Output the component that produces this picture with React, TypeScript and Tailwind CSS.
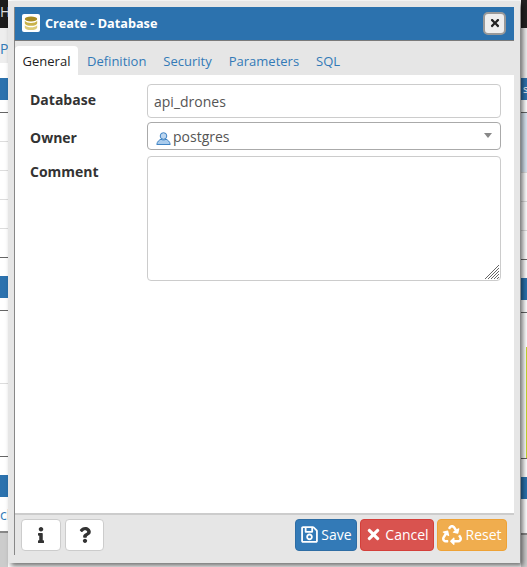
import { FaInfo, FaQuestion, FaRecycle, FaRegSave, FaTimes } from "react-icons/fa";

const tabs = ["Definition", "Security", "Parameters", "SQL"];

const DatabaseIcon = () => (
  <svg width="14" height="14" viewBox="0 0 14 14">
    <ellipse cx="7" cy="3" rx="6.2" ry="2.6" fill="#a88c24" />
    <path d="M.8 4.800C2 6.400 4.500 6.900 7 6.900s5-.5 6.200-2.100v2.400C13.200 8.900 10 9.800 7 9.800S.8 8.900.8 7.200z" fill="#c9b24a" />
    <path d="M.8 9.200C2 10.700 4.500 11.200 7 11.200s5-.5 6.200-2v2.200C13.200 13 10 14 7 14S.8 13 .8 11.400z" fill="#dccb78" />
  </svg>
);

const UserIcon = () => (
  <svg width="15" height="13" viewBox="0 0 15 13">
    <circle cx="7.500" cy="4" r="3.300" fill="#bcd6f0" stroke="#3f83c4" strokeWidth="1" />
    <path d="M.8 12.500c.3-3 2.700-4.800 4.200-5.200 1.300.8 3.700.8 5 0 1.500.4 3.900 2.200 4.200 5.200z" fill="#a9cbec" stroke="#3f83c4" strokeWidth="1" />
  </svg>
);

const Grip = () => (
  <svg width="15" height="15" viewBox="0 0 15 15" className="absolute bottom-[1px] right-[1px]" stroke="#666" strokeWidth="1">
    <path d="M0 14 14 0M3 14 14 3M6 14l8-8M9 14l5-5M12 14l2-2" />
  </svg>
);

function LeftEdge() {
  return (
    <div className="flex w-[8px] flex-col overflow-hidden bg-white text-[14px] text-[#337ab7]">
      <div className="h-[28px] shrink-0 bg-[#1c1c1c] pt-[1px] text-[#ddd]">H</div>
      <div className="flex h-[35px] shrink-0 items-end bg-[#eee] pb-[4px] leading-[20px]">P</div>
      <div className="h-[15px] shrink-0" />
      <div className="h-[22px] shrink-0 bg-[#2c72ae]" />
      <div className="h-[13px] shrink-0 border-b border-[#666]" />
      <div className="h-[29px] shrink-0 border-b border-[#ddd]" />
      <div className="h-[29px] shrink-0 border-b border-[#ddd]" />
      <div className="h-[29px] shrink-0 border-b border-[#ddd]" />
      <div className="h-[29px] shrink-0 border-b border-[#ddd]" />
      <div className="h-[29px] shrink-0 border-b border-[#666]" />
      <div className="h-[18px] shrink-0" />
      <div className="h-[22px] shrink-0 bg-[#2c72ae]" />
      <div className="h-[13px] shrink-0 border-b border-[#666]" />
      <div className="h-[73px] shrink-0 border-b border-[#ddd]" />
      <div className="h-[73px] shrink-0 border-b border-[#666]" />
      <div className="h-[18px] shrink-0" />
      <div className="h-[22px] shrink-0 bg-[#2c72ae]" />
      <div className="h-[36px] shrink-0 border-b-2 border-[#888] pt-[8px] leading-[20px]">cl</div>
      <div className="flex-1 bg-[#ccc]" />
    </div>
  );
}

function RightEdge() {
  return (
    <div className="flex w-[7px] flex-col overflow-hidden bg-white pl-[1px] text-[11px] text-white">
      <div className="h-[28px] shrink-0 bg-[#222]" />
      <div className="h-[50px] shrink-0 bg-[#eee]" />
      <div className="h-[22px] shrink-0 bg-[#2c72ae] pl-[2px] leading-[22px]">s</div>
      <div className="h-[13px] shrink-0 border-b border-[#666]" />
      <div className="h-[60px] shrink-0 border-b border-[#ddd] bg-[#dbe6f2]" />
      <div className="h-[29px] shrink-0 border-b border-[#ddd]" />
      <div className="h-[29px] shrink-0 border-b border-[#ddd]" />
      <div className="h-[29px] shrink-0 border-b border-[#666]" />
      <div className="h-[18px] shrink-0" />
      <div className="h-[22px] shrink-0 bg-[#2c72ae]" />
      <div className="h-[13px] shrink-0 border-b border-[#666]" />
      <div className="flex h-[146px] shrink-0 justify-end border-b border-[#666] pt-[34px]">
        <div className="w-[1px] bg-[#c5d52e]" />
      </div>
      <div className="h-[18px] shrink-0" />
      <div className="h-[22px] shrink-0 bg-[#2c72ae]" />
      <div className="h-[36px] shrink-0 border-b-2 border-[#888]" />
      <div className="flex-1 bg-[#ccc]" />
    </div>
  );
}

export default function App() {
  return (
    <div className="relative flex h-[567px] w-[527px] justify-between overflow-hidden bg-white font-['Open_Sans',sans-serif] text-[14px] text-[#333]">
      <LeftEdge />
      <RightEdge />

      <div className="absolute left-[8px] top-[1px] flex h-[562px] w-[512px] flex-col bg-[#e6e6e6] pb-[8px] pl-[6px] pr-[6px] pt-[6px] shadow-[3px_3px_5px_rgba(0,0,0,0.55)]">
        <div className="flex h-[34px] shrink-0 items-center justify-between border-b border-l border-[#7a7a7a] border-l-[#888] bg-[#2c72ae] pl-[7px] pr-[8px]">
          <div className="flex items-center gap-[5px]">
            <span className="flex h-[18px] w-[18px] items-center justify-center rounded-[2px] bg-white">
              <DatabaseIcon />
            </span>
            <span className="mt-[1px] text-[12.7px] font-bold text-white">Create - Database</span>
          </div>
          <button className="mt-[-1px] flex h-[23px] w-[23px] items-center justify-center rounded-[5px] border-2 border-[#999] bg-[#eee] text-[#222]">
            <FaTimes size={12} />
          </button>
        </div>

        <div className="flex min-h-0 flex-1 flex-col border-l border-[#888] bg-white">
          <div className="flex h-[34px] shrink-0 items-end bg-[#e6e6e6]">
            <div className="flex h-[29px] w-[63px] items-center justify-center rounded-t-[4px] bg-white pt-[3px] text-[13px] text-[#222]">
              General
            </div>
            <div className="ml-[0.5px] flex">
              {tabs.map((t) => (
                <div key={t} className="flex h-[29px] items-center px-[8.5px] pt-[3px] text-[13px] text-[#337ab7]">
                  {t}
                </div>
              ))}
            </div>
          </div>

          <div className="flex flex-1 flex-col gap-[4px] pl-[15px] pr-[13px] pt-[9px]">
            <div className="flex">
              <label className="w-[117px] shrink-0 pt-[6px] font-bold leading-[20px]">Database</label>
              <input
                readOnly
                value="api_drones"
                className="h-[34px] flex-1 rounded-[4px] border border-[#ccc] px-[6px] text-[14px] text-[#555] outline-none"
              />
            </div>
            <div className="flex">
              <label className="w-[117px] shrink-0 pt-[6px] font-bold leading-[20px]">Owner</label>
              <div className="flex h-[28px] flex-1 items-center justify-between rounded-[4px] border border-[#aaa] pl-[8px] pr-[8px] text-[#555]">
                <span className="mt-[1px] flex items-center gap-[2px]">
                  <span className="mt-[3px]">
                    <UserIcon />
                  </span>
                  postgres
                </span>
                <span className="mb-[1px] border-x-[4px] border-t-[5px] border-x-transparent border-t-[#888]" />
              </div>
            </div>
            <div className="mt-[2px] flex">
              <label className="w-[117px] shrink-0 pt-[6px] font-bold leading-[20px]">Comment</label>
              <div className="relative h-[125px] flex-1">
                <textarea readOnly className="block h-full w-full resize-none rounded-[4px] border border-[#ccc] outline-none" />
                <Grip />
              </div>
            </div>
          </div>

          <div className="flex h-[42px] shrink-0 items-center justify-between border-t-2 border-[#ccc] bg-[#e6e6e6] pl-[6px] pr-[7px]">
            <div className="flex gap-[4px]">
              <button className="flex h-[32px] w-[40px] items-center justify-center rounded-[4px] border border-[#ccc] bg-white text-[#333]">
                <FaInfo size={16} />
              </button>
              <button className="flex h-[32px] w-[39px] items-center justify-center rounded-[4px] border border-[#ccc] bg-white text-[#333]">
                <FaQuestion size={16} />
              </button>
            </div>
            <div className="flex gap-[3px] text-white">
              <button className="flex h-[32px] w-[62px] items-center justify-center gap-[2px] rounded-[4px] border border-[#2e6da4] bg-[#337ab7] pb-[1px]">
                <FaRegSave size={19} />
                Save
              </button>
              <button className="flex h-[32px] w-[74px] items-center justify-center gap-[3px] rounded-[4px] border border-[#d43f3a] bg-[#d9534f] pb-[1px]">
                <FaTimes size={17} />
                Cancel
              </button>
              <button className="flex h-[32px] w-[70px] items-center justify-center gap-[3px] rounded-[4px] border border-[#eea236] bg-[#f0ad4e] pb-[1px]">
                <FaRecycle size={20} />
                Reset
              </button>
            </div>
          </div>
        </div>
      </div>
    </div>
  );
}
